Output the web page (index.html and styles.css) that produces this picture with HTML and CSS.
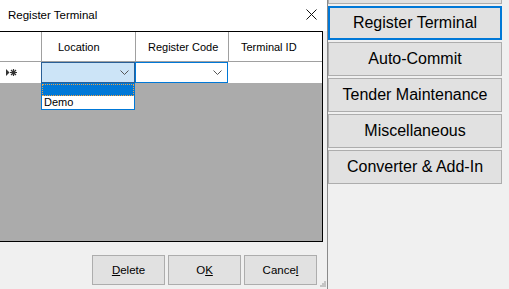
FILE: index.html
```html
<!DOCTYPE html>
<html lang="en">
<head>
    <meta charset="UTF-8">
    <title>Register Terminal</title>
    <link rel="stylesheet" href="styles.css">
</head>
<body>
    <div class="screen">
        <div class="dialog">
            <div class="titlebar">
                <span class="title">Register Terminal</span>
                <svg class="close" width="11" height="11" viewBox="0 0 11 11">
                    <path d="M0.5 0.5 L10.5 10.5 M10.5 0.5 L0.5 10.5" stroke="#111" stroke-width="1" fill="none"/>
                </svg>
            </div>

            <div class="grid">
                <div class="grid-head">
                    <div class="cell rowhead"></div>
                    <div class="cell col-loc">Location</div>
                    <div class="cell">Register Code</div>
                    <div class="cell">Terminal ID</div>
                </div>
                <div class="grid-row">
                    <div class="cell rowhead">
                        <svg width="11" height="7" viewBox="0 0 11 7">
                            <polygon points="0,0 3.5,3.5 0,7" fill="#333"/>
                            <path d="M4 3.5 H11 M5 1 L10 6 M10 1 L5 6 M7.5 0 V7" stroke="#333" stroke-width="1.2" fill="none"/>
                        </svg>
                    </div>
                    <div class="cell combo active">
                        <svg class="chev" width="9" height="5" viewBox="0 0 9 5"><path d="M0.5 0.5 L4.5 4.5 L8.5 0.5" stroke="#555" fill="none"/></svg>
                    </div>
                    <div class="cell combo">
                        <svg class="chev" width="9" height="5" viewBox="0 0 9 5"><path d="M0.5 0.5 L4.5 4.5 L8.5 0.5" stroke="#555" fill="none"/></svg>
                    </div>
                    <div class="cell"></div>

                    <div class="droplist">
                        <div class="item selected"></div>
                        <div class="item">Demo</div>
                    </div>
                </div>
            </div>

            <div class="footer">
                <div class="buttons">
                    <button class="btn"><u>D</u>elete</button>
                    <button class="btn">O<u>K</u></button>
                    <button class="btn">Cance<u>l</u></button>
                </div>
                <svg class="grip" width="6" height="6" viewBox="0 0 6 6">
                    <rect x="4" y="0" width="2" height="2" fill="#c4c4c4"/>
                    <rect x="2" y="2" width="2" height="2" fill="#c4c4c4"/>
                    <rect x="4" y="2" width="2" height="2" fill="#c4c4c4"/>
                    <rect x="0" y="4" width="2" height="2" fill="#c4c4c4"/>
                    <rect x="2" y="4" width="2" height="2" fill="#c4c4c4"/>
                    <rect x="4" y="4" width="2" height="2" fill="#c4c4c4"/>
                </svg>
            </div>
        </div>

        <div class="side">
            <div class="side-btn partial"></div>
            <div class="side-btn current">Register Terminal</div>
            <div class="side-btn">Auto-Commit</div>
            <div class="side-btn">Tender Maintenance</div>
            <div class="side-btn">Miscellaneous</div>
            <div class="side-btn">Converter &amp; Add-In</div>
        </div>
    </div>
</body>
</html>
```

FILE: styles.css
```css
body {
    margin: 0;
    padding: 0;
    background: #f0f0f0;
    font-family: "Liberation Sans", Arial, sans-serif;
    overflow: hidden;
}

.screen {
    display: flex;
    width: 509px;
    height: 289px;
}

.dialog {
    width: 327px;
    height: 289px;
    display: flex;
    flex-direction: column;
    background: #f0f0f0;
    border-right: 1px solid #8a8a8a;
}

.titlebar {
    height: 31px;
    background: white;
    display: flex;
    align-items: center;
    justify-content: space-between;
    padding: 0 10px 0 8px;
    box-sizing: border-box;
}

.title {
    font-size: 11.5px;
    color: #000;
    margin-top: -1px;
}

.close {
    margin-top: -3px;
}

.grid {
    width: 323px;
    height: 211px;
    box-sizing: border-box;
    background: #ababab;
    border-top: 1px solid #000;
    border-right: 1px solid #000;
    border-bottom: 1px solid #000;
    font-size: 11px;
}

.grid-head, .grid-row {
    display: grid;
    grid-template-columns: 41px 94px 93px 1fr;
    background: white;
}

.grid-head {
    height: 29px;
    border-bottom: 1px solid #a0a0a0;
}

.grid-head .cell {
    display: flex;
    align-items: center;
    padding-left: 12px;
    border-left: 1px solid #a0a0a0;
    color: #000;
}

.grid-head .col-loc {
    padding-left: 16px;
}

.grid-head .rowhead {
    border-left: none;
}

.grid-row {
    height: 21px;
    position: relative;
}

.grid-row .cell {
    box-sizing: border-box;
}

.rowhead {
    display: flex;
    align-items: center;
    padding-left: 6px;
}

.combo {
    display: flex;
    align-items: center;
    justify-content: flex-end;
    padding-right: 5px;
    background: white;
    border: 1px solid #0078d7;
}

.combo.active {
    background: #cce4f7;
    border-color: #2a5f96;
}

.droplist {
    position: absolute;
    left: 41px;
    top: 21px;
    width: 94px;
    box-sizing: border-box;
    border: 1px solid #0078d7;
    background: white;
}

.item {
    height: 13px;
    line-height: 13px;
    padding-left: 2px;
    font-size: 11px;
}

.item.selected {
    height: 12px;
    background: #0078d7;
    outline: 1px dotted #f0a040;
    outline-offset: -1px;
}

.footer {
    flex: 1;
    display: flex;
    justify-content: flex-end;
    padding: 13px 1px 2px 0;
}

.buttons {
    display: flex;
    gap: 3px;
    margin-right: 3px;
}

.btn {
    width: 73px;
    height: 30px;
    background: #e1e1e1;
    border: 1px solid #adadad;
    font-family: "Liberation Sans", Arial, sans-serif;
    font-size: 11.5px;
    color: #000;
    padding: 0;
}

.grip {
    align-self: flex-end;
}

.side {
    flex: 1;
    display: flex;
    flex-direction: column;
    gap: 2px;
    padding-right: 7px;
}

.side-btn {
    height: 34px;
    box-sizing: border-box;
    background: #e1e1e1;
    border: 1px solid #adadad;
    display: flex;
    align-items: center;
    justify-content: center;
    font-size: 16px;
    color: #000;
}

.side-btn.partial {
    height: 4px;
    border-top: none;
}

.side-btn.current {
    border: 2px solid #0078d7;
}
```
